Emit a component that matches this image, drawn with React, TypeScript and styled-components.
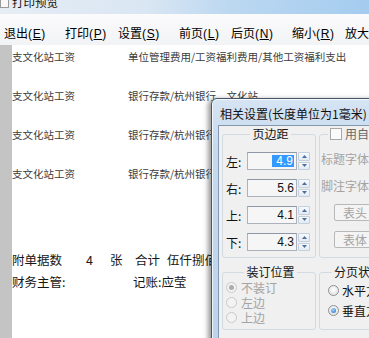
import React from "react";
import styled, { createGlobalStyle } from "styled-components";

const GlobalStyle = createGlobalStyle`
  html, body {
    margin: 0;
    padding: 0;
    background: #fff;
  }
  body {
    font-family: "Noto Sans CJK SC", "Liberation Sans", sans-serif;
    overflow: hidden;
  }
`;

const Window = styled.div`
  position: relative;
  width: 369px;
  height: 338px;
  overflow: hidden;
  display: flex;
  flex-direction: column;
`;

const TitleBar = styled.div`
  height: 14px;
  flex: none;
  display: flex;
  align-items: flex-start;
  gap: 3px;
  overflow: hidden;
  background: linear-gradient(to right, #e6edf5 0%, #d9e6f3 40%, #bcd8f1 62%, #a4ccef 100%);
`;

const TitleText = styled.span`
  margin-top: -5px;
  font-size: 11.5px;
  line-height: 14px;
  color: #111;
  white-space: nowrap;
`;

const MenuBar = styled.div`
  height: 31px;
  flex: none;
  display: flex;
  align-items: center;
  padding: 6px 0 0 4px;
  box-sizing: border-box;
  background: linear-gradient(#fbfbfc, #f2f3f5);
  font-family: "Liberation Sans", "Noto Sans CJK SC", sans-serif;
  font-size: 12px;
  color: #000;
`;

const MenuItem = styled.div<{ $w: number }>`
  width: ${(p) => p.$w}px;
  flex: none;
  white-space: nowrap;
`;

const MenuKey = styled.span`
  letter-spacing: 0.6px;
`;

const Body = styled.div`
  flex: 1;
  display: flex;
  min-height: 0;
`;

const Gutter = styled.div`
  width: 12px;
  flex: none;
  background: #c4c4c4;
`;

const Page = styled.div`
  flex: 1;
  background: #fff;
  padding-top: 5px;
  overflow: hidden;
`;

const EntryRow = styled.div`
  height: 39px;
  display: flex;
  font-size: 10.5px;
  line-height: 14px;
  color: #3c3c3c;
  white-space: nowrap;
`;

const EntryName = styled.span`
  width: 116px;
  flex: none;
`;

const FooterLine = styled.div<{ $first?: boolean }>`
  display: flex;
  height: 22px;
  line-height: 22px;
  margin-top: ${(p) => (p.$first ? "43px" : "0")};
  font-size: 12.5px;
  color: #161616;
  white-space: nowrap;
`;

const FooterCell = styled.span<{ $w?: number }>`
  flex: none;
  width: ${(p) => (p.$w ? `${p.$w}px` : "auto")};
`;

/* dialog */

const Dialog = styled.div`
  position: absolute;
  left: 211px;
  top: 98px;
  width: 230px;
  height: 250px;
  box-sizing: border-box;
  border: 1px solid #45566a;
  border-radius: 6px 6px 0 0;
  background: linear-gradient(#d6e4f3, #c6daef 20%, #bcd3ec);
  box-shadow: -3px 1px 5px rgba(0, 0, 0, 0.4), inset 0 0 0 1px rgba(255, 255, 255, 0.75);
  padding: 0 7px 6px 6px;
  display: flex;
  flex-direction: column;
`;

const DialogTitle = styled.div`
  height: 26px;
  flex: none;
  display: flex;
  align-items: center;
  padding: 2px 0 0 2px;
  box-sizing: border-box;
  font-size: 12px;
  color: #111;
  white-space: nowrap;
`;

const Client = styled.div`
  flex: 1;
  background: #f0f0f0;
  border: 1px solid #8398ae;
  padding: 0 3px 2px 3px;
  display: grid;
  grid-template-columns: 94px 1fr;
  grid-template-rows: 132px 66px;
  column-gap: 3px;
  row-gap: 6px;
  align-content: start;
`;

const Group = styled.fieldset<{ $pl?: number; $pt?: number }>`
  margin: 0;
  min-width: 0;
  padding: ${(p) => p.$pt ?? 0}px 0 0 ${(p) => p.$pl ?? 0}px;
  border: 1px solid #d3dbe2;
  border-radius: 3px;
  display: flex;
  flex-direction: column;
`;

const Legend = styled.legend<{ $center?: boolean; $ml?: number }>`
  padding: 0 2px;
  margin: ${(p) => (p.$center ? "0 auto" : `0 0 0 ${p.$ml ?? 0}px`)};
  font-size: 12px;
  line-height: 16px;
  color: #151515;
  white-space: nowrap;
  display: flex;
  align-items: center;
  gap: 3px;
`;

const MarginRow = styled.div`
  height: 18px;
  display: flex;
  align-items: center;
  margin-bottom: 9px;
  font-size: 12px;
  color: #111;
`;

const MarginLabel = styled.span`
  width: 21px;
  flex: none;
`;

const SpinField = styled.div`
  width: 50px;
  height: 18px;
  box-sizing: border-box;
  border: 1px solid #abb2bb;
  border-top-color: #8e98a4;
  background: #f6f6f6;
  display: flex;
  align-items: center;
  justify-content: flex-end;
  padding-right: 2px;
  font-family: "Liberation Sans", sans-serif;
  font-size: 12px;
  color: #111;
`;

const Selected = styled.span`
  background: #3399ff;
  color: #fff;
  line-height: 12px;
  padding: 0 1px 0 4px;
`;

const SpinButtons = styled.div`
  width: 12px;
  height: 18px;
  margin-left: 1px;
  display: flex;
  flex-direction: column;
  gap: 1px;
`;

const SpinBtn = styled.div`
  flex: 1;
  box-sizing: border-box;
  border: 1px solid #c3cfdc;
  border-radius: 1px;
  background: linear-gradient(#f7fafd, #e2eaf3);
  display: flex;
  align-items: center;
  justify-content: center;
`;

const FontRow = styled.div`
  height: 18px;
  display: flex;
  align-items: center;
  margin-bottom: 9px;
  padding-left: 1px;
  font-size: 12px;
  color: #a3a3a3;
  white-space: nowrap;
`;

const GreyButton = styled.div`
  width: 42px;
  height: 17px;
  margin-left: 13px;
  flex: none;
  box-sizing: border-box;
  border: 1px solid #b8b8b8;
  border-radius: 2px;
  background: #f4f4f4;
  display: flex;
  align-items: center;
  justify-content: center;
  font-size: 12px;
  color: #a3a3a3;
`;

const Check = styled.span`
  width: 12px;
  height: 12px;
  box-sizing: border-box;
  border: 1px solid #a8a8a8;
  background: #fafafa;
  flex: none;
`;

const CheckText = styled.span`
  color: #6a6a6a;
`;

const RadioRow = styled.div<{ $h: number; $gap: number; $off?: boolean }>`
  height: ${(p) => p.$h}px;
  display: flex;
  align-items: center;
  gap: ${(p) => p.$gap}px;
  font-size: 12px;
  color: ${(p) => (p.$off ? "#a3a3a3" : "#111")};
  white-space: nowrap;
`;

const Radio = styled.span<{ $on?: boolean; $off?: boolean }>`
  width: 11px;
  height: 11px;
  flex: none;
  box-sizing: border-box;
  border-radius: 50%;
  border: 1px solid ${(p) => (p.$off ? "#c9c9c9" : "#8d9095")};
  background: ${(p) =>
    p.$off ? "#f3f3f3" : "radial-gradient(circle at 50% 40%, #ffffff, #dadada)"};
  display: flex;
  align-items: center;
  justify-content: center;
  &::after {
    content: "";
    display: ${(p) => (p.$on ? "block" : "none")};
    width: 5px;
    height: 5px;
    border-radius: 50%;
    background: ${(p) =>
      p.$off ? "#acacac" : "radial-gradient(circle at 40% 35%, #a8d8ff, #1a66c2)"};
  }
`;

const Arrow = ({ up }: { up?: boolean }) => (
  <svg width="5" height="3" viewBox="0 0 5 3">
    <path d={up ? "M0 3 L2.5 0 L5 3 Z" : "M0 0 L5 0 L2.5 3 Z"} fill="#4d6d9a" />
  </svg>
);

const AppIcon = () => (
  <svg width="9" height="12" viewBox="0 0 9 12" style={{ marginTop: -4, flex: "none" }}>
    <rect x="0.5" y="0.5" width="8" height="11" fill="#f8f8f8" stroke="#9a9a9a" />
  </svg>
);

const Spin = ({ value, selected }: { value: string; selected?: boolean }) => (
  <>
    <SpinField>{selected ? <Selected>{value}</Selected> : value}</SpinField>
    <SpinButtons>
      <SpinBtn>
        <Arrow up />
      </SpinBtn>
      <SpinBtn>
        <Arrow />
      </SpinBtn>
    </SpinButtons>
  </>
);

const menu = [
  { label: "退出", key: "E", w: 61 },
  { label: "打印", key: "P", w: 53 },
  { label: "设置", key: "S", w: 61 },
  { label: "前页", key: "L", w: 52 },
  { label: "后页", key: "N", w: 61 },
  { label: "缩小", key: "R", w: 53 },
  { label: "放大", key: "A", w: 60 },
];

const entries = [
  "单位管理费用/工资福利费用/其他工资福利支出",
  "银行存款/杭州银行　文化站",
  "银行存款/杭州银行　文化站",
  "银行存款/杭州银行　文化站",
];

const margins = [
  { label: "左:", value: "4.9", selected: true },
  { label: "右:", value: "5.6" },
  { label: "上:", value: "4.1" },
  { label: "下:", value: "4.3" },
];

export default function App() {
  return (
    <Window>
      <GlobalStyle />
      <TitleBar>
        <AppIcon />
        <TitleText>打印预览</TitleText>
      </TitleBar>

      <MenuBar>
        {menu.map((m) => (
          <MenuItem key={m.key} $w={m.w}>
            {m.label}
            <MenuKey>
              (<u>{m.key}</u>)
            </MenuKey>
          </MenuItem>
        ))}
      </MenuBar>

      <Body>
        <Gutter />
        <Page>
          {entries.map((e, i) => (
            <EntryRow key={i}>
              <EntryName>支文化站工资</EntryName>
              <span>{e}</span>
            </EntryRow>
          ))}
          <FooterLine $first>
            <FooterCell $w={74}>附单据数</FooterCell>
            <FooterCell $w={24}>4</FooterCell>
            <FooterCell $w={25}>张</FooterCell>
            <FooterCell $w={32}>合计</FooterCell>
            <FooterCell>伍仟捌佰伍拾元整</FooterCell>
          </FooterLine>
          <FooterLine>
            <FooterCell $w={121}>财务主管:</FooterCell>
            <FooterCell>记账:应莹</FooterCell>
          </FooterLine>
        </Page>
      </Body>

      <Dialog>
        <DialogTitle>相关设置(长度单位为1毫米)</DialogTitle>
        <Client>
          <Group $pl={3} $pt={10}>
            <Legend $center>页边距</Legend>
            {margins.map((m) => (
              <MarginRow key={m.label}>
                <MarginLabel>{m.label}</MarginLabel>
                <Spin value={m.value} selected={m.selected} />
              </MarginRow>
            ))}
          </Group>

          <Group $pt={7}>
            <Legend $ml={8}>
              <Check />
              <CheckText>用自定义字体</CheckText>
            </Legend>
            <FontRow>标题字体</FontRow>
            <FontRow>脚注字体</FontRow>
            <FontRow>
              <GreyButton>表头</GreyButton>
            </FontRow>
            <FontRow>
              <GreyButton>表体</GreyButton>
            </FontRow>
          </Group>

          <Group $pl={3}>
            <Legend $center>装订位置</Legend>
            <RadioRow $h={15} $gap={4} $off>
              <Radio $on $off />
              不装订
            </RadioRow>
            <RadioRow $h={15} $gap={4} $off>
              <Radio $off />
              左边
            </RadioRow>
            <RadioRow $h={15} $gap={4} $off>
              <Radio $off />
              上边
            </RadioRow>
          </Group>

          <Group $pl={8}>
            <Legend $ml={4}>分页状态</Legend>
            <RadioRow $h={20} $gap={3}>
              <Radio />
              水平方向
            </RadioRow>
            <RadioRow $h={20} $gap={3}>
              <Radio $on />
              垂直方向
            </RadioRow>
          </Group>
        </Client>
      </Dialog>
    </Window>
  );
}
